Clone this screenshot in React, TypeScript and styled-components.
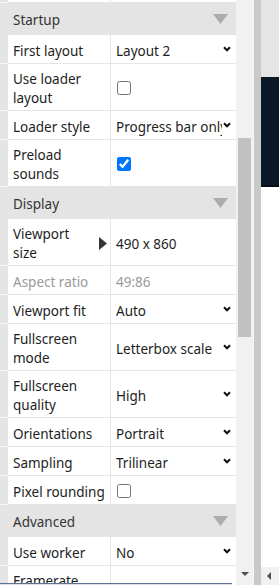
import styled, { createGlobalStyle } from 'styled-components';

type Item =
  | { kind: 'section'; title: string }
  | { kind: 'select'; label: string; value: string }
  | { kind: 'check'; label: string; checked: boolean }
  | { kind: 'text'; label: string; value: string; disabled?: boolean; expandable?: boolean };

// first entry is the row scrolled mostly out of view above "Startup"
const items: Item[] = [
  { kind: 'text', label: '', value: '' },
  { kind: 'section', title: 'Startup' },
  { kind: 'select', label: 'First layout', value: 'Layout 2' },
  { kind: 'check', label: 'Use loader layout', checked: false },
  { kind: 'select', label: 'Loader style', value: 'Progress bar only' },
  { kind: 'check', label: 'Preload sounds', checked: true },
  { kind: 'section', title: 'Display' },
  { kind: 'text', label: 'Viewport size', value: '490 x 860', expandable: true },
  { kind: 'text', label: 'Aspect ratio', value: '49:86', disabled: true },
  { kind: 'select', label: 'Viewport fit', value: 'Auto' },
  { kind: 'select', label: 'Fullscreen mode', value: 'Letterbox scale' },
  { kind: 'select', label: 'Fullscreen quality', value: 'High' },
  { kind: 'select', label: 'Orientations', value: 'Portrait' },
  { kind: 'select', label: 'Sampling', value: 'Trilinear' },
  { kind: 'check', label: 'Pixel rounding', checked: false },
  { kind: 'section', title: 'Advanced' },
  { kind: 'select', label: 'Use worker', value: 'No' },
  { kind: 'select', label: 'Framerate mode', value: 'V-synced' },
];

const Chevron = () => (
  <svg width="8" height="6" viewBox="0 0 8 6">
    <path d="M1 1.2 L4 4.3 L7 1.2" fill="none" stroke="#111" strokeWidth="2" />
  </svg>
);

const SectionArrow = () => (
  <svg width="15" height="10" viewBox="0 0 15 10">
    <polygon points="0,0 15,0 7.5,10" fill="#adadad" />
  </svg>
);

const ExpandArrow = () => (
  <svg width="8" height="13" viewBox="0 0 8 13">
    <polygon points="0,0 8,6.5 0,13" fill="#333" />
  </svg>
);

const PropertyRow = ({ item }: { item: Item }) => {
  if (item.kind === 'section') {
    return (
      <SectionHeader>
        <SectionTitle>{item.title}</SectionTitle>
        <SectionArrow />
      </SectionHeader>
    );
  }

  const muted = item.kind === 'text' && item.disabled;

  return (
    <Row>
      <Gutter />
      <LabelCell $muted={!!muted}>
        <LabelText>{item.label}</LabelText>
        {item.kind === 'text' && item.expandable && <ExpandArrow />}
      </LabelCell>
      <ValueCell $muted={!!muted}>
        {item.kind === 'select' && (
          <SelectBox>
            <SelectText>{item.value}</SelectText>
            <Chevron />
          </SelectBox>
        )}
        {item.kind === 'check' && <CheckBox type="checkbox" defaultChecked={item.checked} />}
        {item.kind === 'text' && <ValueText>{item.value}</ValueText>}
      </ValueCell>
    </Row>
  );
};

export default function App() {
  return (
    <>
      <GlobalStyle />
      <Layout>
        <PropertiesPane>
          <PropertyList>
            {items.map((item, i) => (
              <PropertyRow key={i} item={item} />
            ))}
          </PropertyList>
          <BottomEdge />
        </PropertiesPane>
        <ScrollTrack>
          <ScrollThumb />
          <ScrollArrowDown />
        </ScrollTrack>
        <Splitter />
        <PreviewPane>
          <PreviewTop />
          <PreviewCanvas />
          <PreviewRest />
          <PreviewScrollbar>
            <ScrollArrowLeft />
          </PreviewScrollbar>
        </PreviewPane>
      </Layout>
    </>
  );
}

const GlobalStyle = createGlobalStyle`
  html, body {
    margin: 0;
    padding: 0;
    background: #ffffff;
  }
  body {
    font-family: "Noto Sans", "Open Sans", sans-serif;
  }
  * {
    box-sizing: border-box;
  }
`;

const Layout = styled.div`
  display: flex;
  width: 279px;
  height: 585px;
  overflow: hidden;
`;

const PropertiesPane = styled.div`
  width: 236px;
  flex-shrink: 0;
  display: flex;
  flex-direction: column;
  overflow: hidden;
`;

const PropertyList = styled.div`
  flex: 1;
  overflow: hidden;
  display: flex;
  flex-direction: column;

  & > :first-child {
    margin-top: -26px;
  }
`;

const BottomEdge = styled.div`
  width: 232px;
  height: 2px;
  flex-shrink: 0;
  border-top: 1px solid #5d7190;
  background: #d6dee9;
`;

const SectionHeader = styled.div`
  height: 32px;
  flex-shrink: 0;
  display: flex;
  align-items: center;
  justify-content: space-between;
  padding: 0 8px 0 13px;
  background: #e4e4e4;
  color: #333;
  font-size: 13.5px;
`;

const SectionTitle = styled.span`
  padding-top: 2px;
`;

const Row = styled.div`
  display: flex;
  flex-shrink: 0;
  min-height: 29px;
`;

const Gutter = styled.div`
  width: 8px;
  flex-shrink: 0;
  background: #e4e4e4;
  border-bottom: 1px solid #f6f6f6;
`;

const LabelCell = styled.div<{ $muted: boolean }>`
  width: 103px;
  flex-shrink: 0;
  display: flex;
  align-items: center;
  gap: 4px;
  padding: 6px 3px 2px 5px;
  border-right: 1px solid #e6e6e6;
  border-bottom: 1px solid #e6e6e6;
  color: ${(p) => (p.$muted ? '#9a9a9a' : '#1e1e1e')};
  font-size: 13.5px;
  line-height: 19px;

  & > svg {
    margin-top: -2px;
  }
`;

const LabelText = styled.span`
  flex: 1;
`;

const ValueCell = styled.div<{ $muted: boolean }>`
  flex: 1;
  min-width: 0;
  display: flex;
  align-items: center;
  padding: 0 5px 0 5px;
  border-bottom: 1px solid #e6e6e6;
  color: ${(p) => (p.$muted ? '#9a9a9a' : '#1e1e1e')};
  font-size: 13.5px;
`;

const SelectBox = styled.div`
  flex: 1;
  min-width: 0;
  display: flex;
  align-items: center;
  gap: 1px;
`;

const SelectText = styled.span`
  flex: 1;
  padding-top: 4px;
  white-space: nowrap;
  overflow: hidden;
`;

const ValueText = styled.span`
  padding-top: 4px;
  white-space: nowrap;
`;

const CheckBox = styled.input`
  width: 14px;
  height: 14px;
  margin: 1px 0 0 1px;
`;

const ScrollTrack = styled.div`
  width: 17px;
  flex-shrink: 0;
  position: relative;
  background: #f1f1f1;
`;

const ScrollThumb = styled.div`
  position: absolute;
  left: 2px;
  top: 138px;
  width: 13px;
  height: 199px;
  background: #c1c1c1;
`;

const ScrollArrowDown = styled.div`
  position: absolute;
  left: 5px;
  top: 572px;
  width: 0;
  height: 0;
  border-left: 4px solid transparent;
  border-right: 4px solid transparent;
  border-top: 4px solid #505050;
`;

const Splitter = styled.div`
  width: 8px;
  flex-shrink: 0;
  border-left: 1px solid #f7f7f7;
  background: #c9c9c9;
`;

const PreviewPane = styled.div`
  flex: 1;
  display: flex;
  flex-direction: column;
`;

const PreviewTop = styled.div`
  height: 77px;
  background: #e5e5e5;
`;

const PreviewCanvas = styled.div`
  height: 110px;
  background: #0b1828;
  border-bottom: 2px solid #050d17;
`;

const PreviewRest = styled.div`
  flex: 1;
  background: #ffffff;
`;

const PreviewScrollbar = styled.div`
  height: 18px;
  display: flex;
  align-items: center;
  padding-left: 6px;
  background: #f1f1f1;
`;

const ScrollArrowLeft = styled.div`
  width: 0;
  height: 0;
  border-top: 4px solid transparent;
  border-bottom: 4px solid transparent;
  border-right: 4px solid #505050;
`;
